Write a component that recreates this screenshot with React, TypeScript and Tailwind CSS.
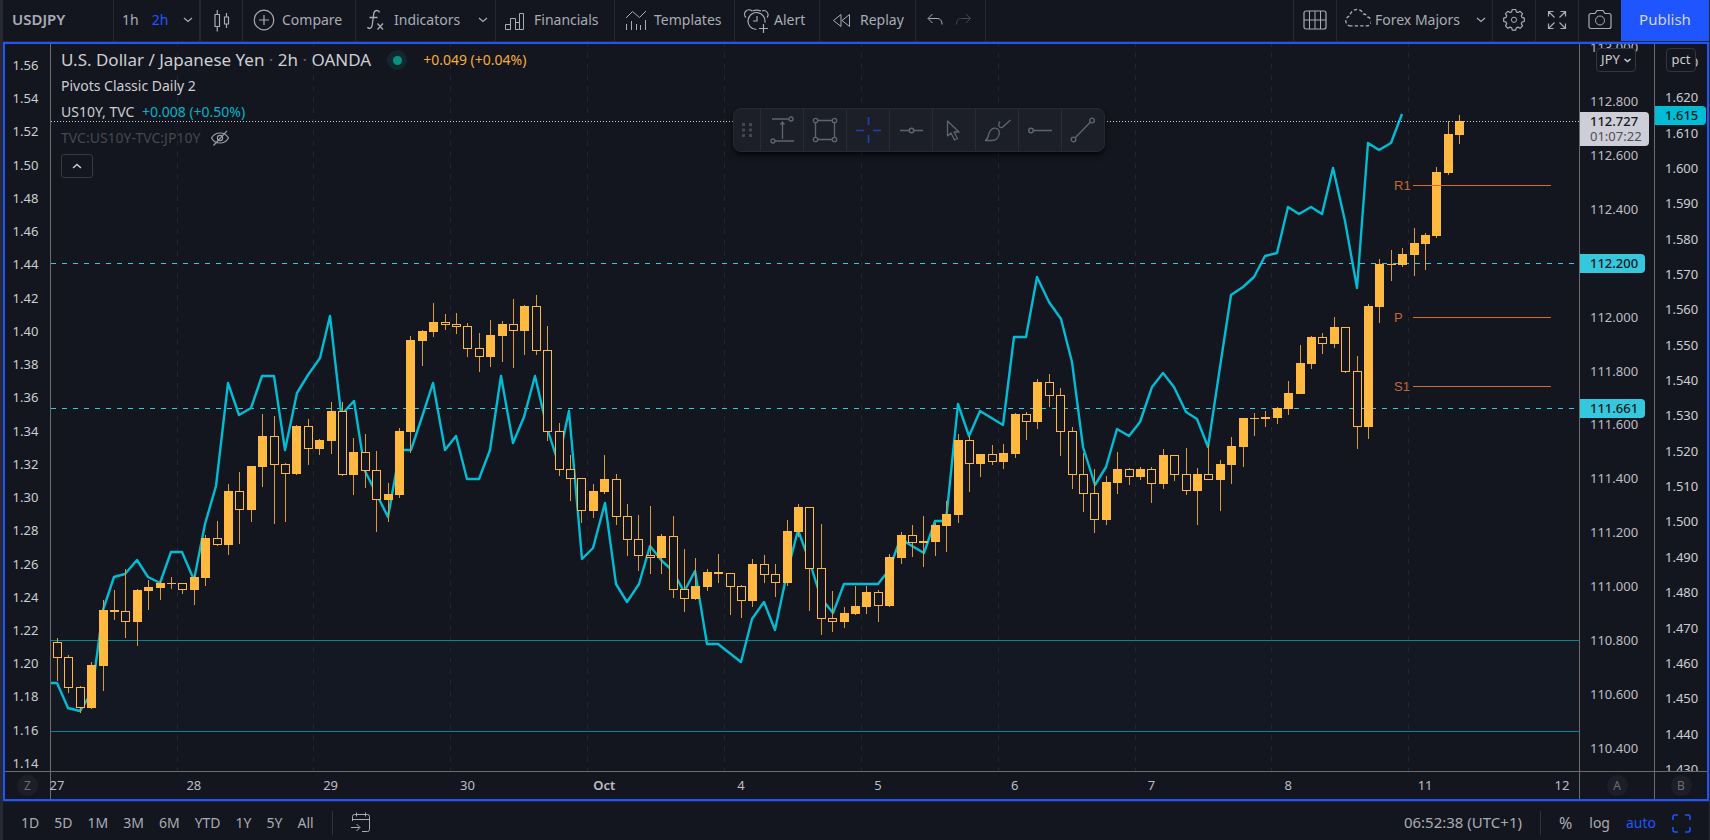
import type { ReactNode } from "react";

type Candle = [high: number, top: number, bottom: number, low: number, up: 0 | 1];

const candles: Candle[] = [
  [638, 642, 658, 681, 0], [655, 657, 688, 693, 0], [686, 687, 708, 713, 0], [662, 665, 708, 709, 1],
  [600, 610, 666, 691, 1], [590, 610, 612, 620, 1], [569, 611, 622, 638, 0], [589, 590, 622, 646, 1],
  [580, 587, 591, 610, 1], [581, 583, 588, 600, 1], [577, 583, 584, 589, 1], [583, 583, 590, 594, 0],
  [575, 577, 590, 605, 1], [535, 538, 578, 586, 1], [521, 538, 545, 546, 0], [484, 491, 545, 555, 1],
  [472, 491, 510, 544, 0], [466, 466, 510, 522, 1], [414, 436, 467, 487, 1], [416, 436, 465, 524, 0],
  [463, 464, 474, 522, 0], [425, 426, 474, 475, 1], [419, 426, 449, 465, 0], [439, 440, 449, 455, 1],
  [402, 411, 441, 454, 1], [402, 411, 475, 476, 0], [438, 452, 475, 495, 1], [434, 452, 471, 488, 0],
  [451, 470, 500, 532, 0], [483, 494, 500, 522, 1], [428, 431, 495, 498, 1], [336, 340, 432, 453, 1],
  [330, 331, 341, 366, 1], [303, 322, 332, 337, 1], [314, 322, 325, 330, 0], [313, 324, 327, 334, 0],
  [323, 326, 349, 357, 0], [333, 348, 357, 372, 0], [320, 335, 357, 367, 1], [321, 324, 336, 362, 1],
  [299, 324, 331, 368, 0], [305, 306, 331, 355, 1], [295, 306, 351, 355, 0], [326, 350, 432, 441, 0],
  [423, 431, 470, 476, 0], [455, 469, 479, 501, 0], [478, 478, 511, 523, 0], [484, 491, 511, 518, 1],
  [455, 479, 492, 494, 1], [474, 479, 517, 525, 0], [504, 516, 540, 556, 0], [515, 539, 556, 571, 0],
  [506, 555, 558, 574, 0], [534, 536, 558, 574, 1], [516, 536, 590, 598, 0], [549, 589, 599, 612, 0],
  [558, 586, 599, 600, 1], [569, 572, 587, 591, 1], [554, 572, 574, 583, 1], [573, 573, 587, 615, 0],
  [585, 586, 601, 618, 0], [559, 564, 601, 607, 1], [555, 564, 575, 583, 0], [564, 574, 583, 597, 0],
  [520, 531, 583, 586, 1], [504, 507, 532, 537, 1], [507, 507, 569, 611, 0], [524, 568, 619, 635, 0],
  [591, 618, 622, 632, 0], [607, 613, 622, 628, 1], [586, 606, 614, 615, 1], [586, 592, 607, 614, 1],
  [590, 592, 606, 622, 0], [554, 557, 606, 607, 1], [532, 535, 558, 564, 1], [525, 535, 543, 557, 0],
  [516, 541, 543, 567, 1], [523, 525, 542, 556, 1], [501, 514, 526, 552, 1], [434, 440, 515, 523, 1],
  [436, 440, 464, 492, 0], [454, 454, 464, 477, 1], [445, 454, 462, 465, 0], [444, 453, 462, 469, 1],
  [413, 414, 454, 458, 1], [412, 414, 422, 440, 0], [379, 382, 422, 429, 1], [374, 382, 396, 407, 0],
  [388, 395, 432, 456, 0], [427, 431, 475, 489, 0], [453, 474, 494, 512, 0], [469, 493, 520, 533, 0],
  [476, 482, 520, 525, 1], [452, 469, 483, 494, 1], [468, 469, 477, 485, 0], [467, 469, 477, 480, 1],
  [467, 469, 484, 503, 0], [449, 455, 484, 489, 1], [455, 455, 475, 481, 0], [448, 474, 491, 495, 0],
  [468, 474, 491, 525, 1], [444, 474, 480, 480, 0], [460, 464, 480, 511, 1], [437, 446, 465, 484, 1],
  [418, 418, 447, 467, 1], [413, 418, 419, 436, 1], [411, 417, 419, 427, 1], [407, 408, 418, 424, 1],
  [381, 393, 409, 415, 1], [345, 363, 394, 394, 1], [336, 337, 364, 369, 1], [333, 337, 344, 354, 0],
  [317, 327, 344, 348, 1], [327, 327, 372, 373, 0], [356, 371, 427, 449, 0], [304, 306, 427, 439, 1],
  [259, 264, 307, 323, 1], [250, 264, 265, 281, 1], [248, 254, 265, 267, 1], [228, 243, 255, 276, 1],
  [233, 235, 244, 270, 1], [167, 172, 236, 238, 1], [121, 134, 173, 175, 1], [115, 121, 135, 144, 1],
];

const yieldLine =
  "51,683 57,683 68,708 80,711 92,692 99,640 103,610 114,577 125,574 137,560 148,577 160,583 171,552 182,552 194,580 205,524 216,486 228,383 239,415 251,408 262,376 274,376 285,450 297,393 308,375 320,358 330,316 341,413 343,413 354,401 365,471 377,495 388,517 400,450 411,450 422,417 433,383 445,450 456,436 467,479 479,479 490,450 501,376 513,443 524,417 535,376 547,428 558,462 569,411 582,559 593,548 605,503 616,584 627,602 639,584 650,546 662,561 673,571 684,592 695,571 707,644 718,644 741,662 752,619 764,602 775,630 787,573 798,530 809,560 821,598 833,613 844,584 878,584 889,570 901,537 907,543 924,553 935,521 946,521 958,404 969,436 980,411 1003,425 1014,337 1026,337 1037,277 1049,302 1061,319 1072,362 1083,447 1095,485 1106,467 1117,429 1129,436 1140,422 1152,387 1163,373 1174,387 1186,412 1197,419 1208,447 1220,367 1231,295 1243,287 1254,277 1265,256 1277,253 1288,207 1299,214 1311,207 1322,214 1333,168 1345,221 1357,288 1368,143 1379,150 1391,143 1402,114";

const dayLines = [177, 313, 450, 587, 724, 861, 998, 1135, 1271, 1408];

const leftScale = Array.from({ length: 22 }, (_, i) => (1.56 - i * 0.02).toFixed(2));
const priceScale = Array.from({ length: 14 }, (_, i) => (113 - i * 0.2).toFixed(3));
const pctScale = Array.from({ length: 21 }, (_, i) => (1.63 - i * 0.01).toFixed(3));
const timeScale = ["27", "28", "29", "30", "Oct", "4", "5", "6", "7", "8", "11", "12"];
const ranges = ["1D", "5D", "1M", "3M", "6M", "YTD", "1Y", "5Y", "All"];

const pivots = [
  { name: "R1", y: 185 },
  { name: "P", y: 317 },
  { name: "S1", y: 386 },
];

function Icon({ children, className = "size-7" }: { children: ReactNode; className?: string }) {
  return (
    <svg viewBox="0 0 28 28" className={`shrink-0 ${className}`} fill="none" stroke="currentColor" aria-hidden="true">
      {children}
    </svg>
  );
}

function Chevron() {
  return (
    <svg viewBox="0 0 10 6" className="h-[6px] w-[10px] shrink-0" fill="none" stroke="currentColor" strokeWidth="1.2" aria-hidden="true">
      <path d="M1 1l4 3.5L9 1" />
    </svg>
  );
}

function ToolButton({ className, label, children }: { className: string; label?: string; children: ReactNode }) {
  return (
    <button type="button" aria-label={label} className={`flex h-full shrink-0 items-center border-[#262932] pb-[2px] ${className}`}>
      {children}
    </button>
  );
}

function Toolbar() {
  return (
    <header className="flex h-[42px] shrink-0 items-center border-b border-[#262932] bg-[#13161e] text-sm text-[#a9acb5]">
      <ToolButton className="w-[111px] border-r pl-[9px] text-[15px] font-semibold">USDJPY</ToolButton>
      <div className="flex h-full w-[87px] shrink-0 items-center border-r-2 border-[#262932] pr-[6px] pb-[2px] pl-2">
        <button type="button">1h</button>
        <button type="button" className="ml-[13px] text-[#1f55ff]">2h</button>
        <button type="button" aria-label="Time intervals" className="ml-auto"><Chevron /></button>
      </div>
      <ToolButton className="w-[42px] justify-center border-r" label="Chart type">
        <Icon>
          <path d="M7 8.500h4.500v12H7zM9.250 4v4.500M9.250 20.500v5M16.500 11h4v7h-4zM18.500 7v4M18.500 18v4" strokeWidth="1.200" />
        </Icon>
      </ToolButton>
      <ToolButton className="w-[113px] gap-1 border-r pl-[7px]">
        <Icon>
          <circle cx="14" cy="14" r="9.800" strokeWidth="1.200" />
          <path d="M14 9v10M9 14h10" strokeWidth="1.200" />
        </Icon>
        <span>Compare</span>
      </ToolButton>
      <ToolButton className="w-[140px] border-r pr-[7px] pl-[6px]">
        <Icon>
          <path d="M17.500 6.500c-.3-1.400-1.300-2-2.500-2-1.900 0-3 1.300-3.300 3.500l-1.500 11c-.3 2.300-1.200 3.500-2.700 3.500-1.100 0-1.700-.6-1.900-1.500M7.500 11.500h8M15.500 17.500l5.500 6M21 17.500l-5.500 6" strokeWidth="1.300" />
        </Icon>
        <span className="ml-1">Indicators</span>
        <span className="ml-auto"><Chevron /></span>
      </ToolButton>
      <ToolButton className="w-[119px] gap-[5px] border-r pl-[5px]">
        <Icon>
          <path d="M4.500 23.500v-5h5v5zM9.500 23.500v-11h5v11M14.500 23.500v-7h4M18.500 23.500v-16h4v16zM14.500 23.500h4" />
        </Icon>
        <span>Financials</span>
      </ToolButton>
      <ToolButton className="w-[120px] gap-1 border-r pl-[7px]">
        <Icon>
          <path d="M4 12l6.500-6.500 7 6L24 5M4.500 18v6M9.500 15v9M14.500 18v6M18.500 19v5M23.500 14v10" />
        </Icon>
        <span>Templates</span>
      </ToolButton>
      <ToolButton className="w-[85px] gap-1 border-r pl-[7px]">
        <Icon>
          <path d="M14.500 23.500a8.500 8.500 0 1 1 8.300-6.800M15 10v5h-4M4 11.500A4.200 4.200 0 0 1 10 5M20 5a4.200 4.200 0 0 1 5 6.500M10.500 5q4-1.800 8.500 0M21.500 18v9M17 22.500h9" strokeWidth="1.200" />
        </Icon>
        <span>Alert</span>
      </ToolButton>
      <ToolButton className="w-[96px] gap-1 border-r pl-2">
        <Icon>
          <path d="M13 8.500v12l-7.500-6zM21.500 8.500v12l-7.500-6z" strokeLinejoin="round" />
        </Icon>
        <span>Replay</span>
      </ToolButton>
      <div className="flex h-full w-[70px] shrink-0 items-center border-r border-[#262932] pb-[2px] pl-[5px]">
        <button type="button" aria-label="Undo">
          <Icon><path d="M11.500 8L7 12.500l4.500 4.500M7.500 12.500H16c3.200 0 5 2 5 6" /></Icon>
        </button>
        <button type="button" aria-label="Redo" className="text-[#43464f]">
          <Icon><path d="M17 8l4.500 4.500L17 17M21 12.500h-8.500c-3.200 0-5 2-5 6" /></Icon>
        </button>
      </div>
      <div className="h-full flex-1" />
      <ToolButton className="w-[44px] justify-center border-x" label="Layout">
        <Icon>
          <rect x="3" y="5" width="22" height="18" rx="2" strokeWidth="1.200" />
          <path d="M8.500 5v18M14 5v18M19.500 5v18M3 14h22" />
        </Icon>
      </ToolButton>
      <ToolButton className="w-[156px] border-r pr-[6px] pl-[6px]">
        <Icon>
          <path d="M7 23h15.500a4 4 0 0 0 1.200-8c-.8-1.700-2-2.600-3.700-2.700A6.500 6.500 0 0 0 7.500 14 4.700 4.700 0 0 0 7 23z" strokeDasharray="3 2" strokeWidth="1.200" transform="translate(-1.500 -5.500) scale(1.100)" />
        </Icon>
        <span className="ml-1">Forex Majors</span>
        <span className="ml-auto"><Chevron /></span>
      </ToolButton>
      <ToolButton className="w-[43px] justify-center border-r" label="Settings">
        <Icon>
          <path d="M11.600 5.900l.7-2.400h3.400l.7 2.400 1.500.6 2.200-1.200 2.400 2.400-1.200 2.200.6 1.500 2.400.7v3.400l-2.400.7-.6 1.500 1.200 2.200-2.400 2.400-2.200-1.200-1.500.6-.7 2.400h-3.400l-.7-2.400-1.500-.6-2.200 1.200-2.400-2.400 1.200-2.200-.6-1.500-2.400-.7v-3.400l2.400-.7.6-1.500-1.200-2.200 2.400-2.400 2.200 1.200z" strokeLinejoin="round" strokeWidth="1.200" />
          <circle cx="14" cy="13.800" r="2.600" />
        </Icon>
      </ToolButton>
      <ToolButton className="w-[43px] justify-center border-r" label="Fullscreen">
        <Icon>
          <path d="M5.500 10.500v-5h5M5.500 5.500l6 6M17.500 5.500h5v5M22.500 5.500l-6 6M5.500 17.500v5h5M5.500 22.500l6-6M17.500 22.500h5v-5M22.500 22.500l-6-6" strokeWidth="1.200" />
        </Icon>
      </ToolButton>
      <ToolButton className="w-[42px] justify-center" label="Snapshot">
        <Icon>
          <path d="M5 7.500h4l2-3h6l2 3h4a2 2 0 0 1 2 2v11a2 2 0 0 1-2 2H5a2 2 0 0 1-2-2v-11a2 2 0 0 1 2-2z" strokeWidth="1.200" />
          <circle cx="14" cy="14.500" r="4.500" />
        </Icon>
      </ToolButton>
      <button type="button" className="h-full w-[88px] shrink-0 bg-[#1f55ff] pb-[2px] text-[15px] text-[#d1d4dc]">Publish</button>
    </header>
  );
}

function PriceChart() {
  return (
    <svg viewBox="51 44 1528 727" preserveAspectRatio="none" className="block h-full w-full" role="img" aria-label="USDJPY price chart">
      <g shapeRendering="crispEdges" fill="none">
        <rect x="51" y="641" width="1528" height="90" fill="#141822" />
        {dayLines.map((x) => (
          <path key={x} d={`M${x + 0.5} 42V771`} stroke="#232630" strokeDasharray="5 6" />
        ))}
        <path d="M51 640.500H1579M51 731.500H1579" stroke="#04858f" />
        <path d="M51 263.500H1579M51 408.500H1579" stroke="#35c8dc" strokeDasharray="5 6" />
      </g>
      <polyline points={yieldLine} fill="none" stroke="#00bcd4" strokeWidth="2.400" strokeLinejoin="round" />
      <g shapeRendering="crispEdges">
        {candles.map(([high, top, bottom, low, up], i) => {
          const x = Math.floor(57.5 + 11.4 * i);
          return (
            <g key={i}>
              <rect x={x} y={high} width="1" height={low - high} fill="#d99a38" />
              {up ? (
                <rect x={x - 4} y={top} width="9" height={bottom - top} fill="#ffb941" />
              ) : (
                <rect x={x - 3.5} y={top + 0.5} width="8" height={bottom - top - 1} fill="#13161e" stroke="#ffb941" />
              )}
            </g>
          );
        })}
        {pivots.map((p) => (
          <path key={p.name} d={`M1413 ${p.y + 0.5}H1551`} stroke="#d06f31" />
        ))}
        <path d="M51 121.500H1579" stroke="#cdced6" strokeDasharray="1 2" />
      </g>
      <g fill="#c4682f" fontSize="13" fontFamily="Liberation Sans, sans-serif">
        {pivots.map((p) => (
          <text key={p.name} x="1394" y={p.y + 5}>{p.name}</text>
        ))}
      </g>
    </svg>
  );
}

function Legend() {
  return (
    <div className="absolute top-[3px] left-[10px] flex flex-col items-start text-sm leading-[26px] text-[#cdced3]">
      <div className="flex h-[26px] items-center">
        <h1 className="text-[17px] whitespace-pre">U.S. Dollar / Japanese Yen <span className="text-[#5b5e67]">·</span> 2h <span className="text-[#5b5e67]">·</span> OANDA</h1>
        <span className="ml-4 flex size-5 items-center justify-center rounded-full bg-[#11292e]">
          <span className="size-[9px] rounded-full bg-[#04937f]" />
        </span>
        <span className="ml-4 text-[#f5ae3c]">+0.049 (+0.04%)</span>
      </div>
      <div>Pivots Classic Daily 2</div>
      <div>US10Y, TVC <span className="ml-1 text-[#00b4ca]">+0.008 (+0.50%)</span></div>
      <div className="flex items-center text-[#454851]">
        TVC:US10Y-TVC:JP10Y
        <button type="button" aria-label="Show study" className="ml-[10px] text-[#9c9fa8]">
          <svg viewBox="0 0 20 16" className="h-4 w-5" fill="none" stroke="currentColor" strokeWidth="1.200" aria-hidden="true">
            <path d="M1.500 8C3.500 4.500 6.500 3 10 3s6.500 1.500 8.500 5c-2 3.500-5 5-8.500 5S3.500 11.500 1.500 8zM17 .8L3.500 15.500" />
            <circle cx="10" cy="8" r="2.600" />
          </svg>
        </button>
      </div>
      <button type="button" aria-label="Collapse legend" className="mt-[3px] flex h-6 w-8 items-center justify-center rounded-[3px] border border-[#363942]">
        <svg viewBox="0 0 10 6" className="h-[6px] w-[10px]" fill="none" stroke="currentColor" strokeWidth="1.500" aria-hidden="true">
          <path d="M1 5l4-3.500L9 5" />
        </svg>
      </button>
    </div>
  );
}

const drawingTools: { name: string; icon: ReactNode }[] = [
  { name: "Price range", icon: <path d="M4 3h17M7 25h19M14.500 23V6M12.500 8.500l2-2.500 2 2.500M23 1a2 2 0 1 1 0 4 2 2 0 0 1 0-4M5 23a2 2 0 1 1 0 4 2 2 0 0 1 0-4" strokeWidth="1.300" /> },
  { name: "Rectangle", icon: <g strokeWidth="1.300"><path d="M6.500 4.500h15M6.500 23.500h15M4.500 6.500v15M23.500 6.500v15" /><circle cx="4.500" cy="4.500" r="2.200" /><circle cx="23.500" cy="4.500" r="2.200" /><circle cx="4.500" cy="23.500" r="2.200" /><circle cx="23.500" cy="23.500" r="2.200" /></g> },
  { name: "Cross", icon: <path d="M14.500 1v8M14.500 19v8M2 14.500h8M19 14.500h8" stroke="#1f3fb0" strokeWidth="1.700" /> },
  { name: "Horizontal line", icon: <g strokeWidth="1.500"><path d="M3 14.500h9M17 14.500h9" /><circle cx="14.500" cy="14.500" r="2.300" /></g> },
  { name: "Arrow", icon: <path d="M7.500 5v15l3.500-3 3.500 7 3-1.500-3.500-6.500h5z" strokeLinejoin="round" strokeWidth="1.300" /> },
  { name: "Brush", icon: <path d="M2 24.500c3-1 3-4 4-7 1.200-3.300 3.500-5.300 6-5.300 2.800 0 4.500 2 4.300 5-.3 4.300-3.300 7.300-7.800 7.300zM17 5.500c-1.500 2-1.500 4-.500 5.300s2.500 1 3.800-.300L27.500 4" strokeWidth="1.300" /> },
  { name: "Horizontal ray", icon: <g strokeWidth="1.500"><circle cx="5" cy="14.500" r="2.300" /><path d="M7.500 14.500H26" /></g> },
  { name: "Trend line", icon: <g strokeWidth="1.300"><path d="M6 22L21.500 6" /><circle cx="4.500" cy="23.500" r="2.300" /><circle cx="23" cy="4.500" r="2.300" /></g> },
];

function DrawingBar() {
  return (
    <div className="absolute top-16 left-[682px] flex h-11 items-stretch overflow-hidden rounded-lg border border-[#262932] bg-[#1c1f28] text-[#5c6672] shadow-md shadow-black/60">
      <div className="flex w-[26px] items-center justify-center">
        <svg viewBox="0 0 10 14" className="h-[14px] w-[10px]" fill="#43464f" aria-hidden="true">
          <path d="M0 0h3v3H0zM7 0h3v3H7zM0 5.500h3v3H0zM7 5.500h3v3H7zM0 11h3v3H0zM7 11h3v3H7z" />
        </svg>
      </div>
      {drawingTools.map((tool) => (
        <button key={tool.name} type="button" aria-label={tool.name} className="flex w-[43px] items-center justify-center border-l border-[#292c35]">
          <Icon>{tool.icon}</Icon>
        </button>
      ))}
    </div>
  );
}

function AxisCorner({ letter, className }: { letter: string; className: string }) {
  return (
    <div className={`flex items-center justify-center ${className}`}>
      <span className="flex size-[21px] items-center justify-center rounded-full bg-[#1c1f28] text-xs text-[#6a6d76]">{letter}</span>
    </div>
  );
}

function ChartPanel() {
  return (
    <main className="flex min-h-0 flex-1 flex-col border-2 border-[#1f55ff] text-[13px] text-[#bdbec3]">
      <div className="flex min-h-0 flex-1">
        <div className="flex w-[46px] shrink-0 flex-col items-center justify-between border-r border-[#6c6c6c] pt-[13px] pr-1 leading-4 text-[#cdced3]">
          {leftScale.map((v) => <span key={v}>{v}</span>)}
        </div>
        <div className="relative min-w-0 flex-1">
          <div className="absolute inset-0"><PriceChart /></div>
          <Legend />
          <DrawingBar />
        </div>
        <div className="relative w-[75px] shrink-0 overflow-hidden border-l border-[#6c6c6c]">
          <div className="absolute inset-x-0 -top-[5px] bottom-[15px] flex flex-col items-start justify-between pl-[10px] leading-4">
            {priceScale.map((v) => <span key={v}>{v}</span>)}
          </div>
          <button type="button" className="absolute top-1 left-4 flex h-6 w-10 items-center justify-center gap-1 rounded border border-[#33363f] bg-[#13161e] text-[#cdced3]">
            JPY
            <svg viewBox="0 0 7 5" className="h-[5px] w-[7px]" fill="none" stroke="currentColor" strokeWidth="1.500" aria-hidden="true"><path d="M.5 1l3 2.500 3-2.500" /></svg>
          </button>
          <div className="absolute top-[68px] left-0 w-[69px] rounded-r-sm bg-[#cdced8] py-[2px] pl-[10px] leading-[15px] text-[#13161e]">
            <div className="font-medium">112.727</div>
            <div className="text-[#4d4f57]">01:07:22</div>
          </div>
          <div className="absolute top-[210px] left-0 w-[65px] rounded-r-sm bg-[#35c8dc] pl-[10px] leading-[19px] font-medium text-[#13161e]">112.200</div>
          <div className="absolute top-[355px] left-0 w-[65px] rounded-r-sm bg-[#35c8dc] pl-[10px] leading-[19px] font-medium text-[#13161e]">111.661</div>
        </div>
        <div className="relative w-[53px] shrink-0 overflow-hidden border-l border-[#6c6c6c] text-[#cdced3]">
          <div className="absolute inset-x-0 top-[10px] -bottom-[6px] flex flex-col items-start justify-between pl-[10px] leading-4">
            {pctScale.map((v) => <span key={v}>{v}</span>)}
          </div>
          <button type="button" className="absolute top-1 left-[11px] h-6 w-[30px] rounded border border-[#33363f] bg-[#13161e]">pct</button>
          <div className="absolute top-[62px] left-0 w-[51px] rounded-r-sm bg-[#00bcd4] pl-[10px] leading-[19px] font-medium text-[#13161e]">1.615</div>
        </div>
      </div>
      <div className="flex h-7 shrink-0 border-t border-[#6c6c6c]">
        <AxisCorner letter="Z" className="w-[46px] border-r border-[#6c6c6c]" />
        <div className="flex min-w-0 flex-1 items-center justify-between pt-px pr-[17px] pl-[6px]">
          {timeScale.map((t) => (
            <span key={t} className={t === "Oct" ? "flex w-0 justify-center font-semibold" : "flex w-0 justify-center"}>{t}</span>
          ))}
        </div>
        <AxisCorner letter="A" className="w-[75px] border-l border-[#6c6c6c]" />
        <AxisCorner letter="B" className="w-[53px] border-l border-[#6c6c6c]" />
      </div>
    </main>
  );
}

function BottomBar() {
  return (
    <footer className="flex h-[39px] shrink-0 items-center border-t border-[#262932] px-[18px] pt-1 text-sm text-[#a9acb5]">
      <div className="flex gap-[15px]">
        {ranges.map((r) => <button key={r} type="button">{r}</button>)}
      </div>
      <div className="ml-[18px] h-6 w-px bg-[#30333c]" />
      <button type="button" aria-label="Go to date" className="ml-[14px]">
        <Icon>
          <path d="M5.500 12V7.500a2 2 0 0 1 2-2h13a2 2 0 0 1 2 2v13a2 2 0 0 1-2 2H15M5.500 10.500h17M9.500 3.500v4M18.500 3.500v4M4 18.500h8.500M9.500 15l3.500 3.500L9.500 22" />
        </Icon>
      </button>
      <div className="flex-1" />
      <button type="button" className="text-[15px]">06:52:38 (UTC+1)</button>
      <div className="ml-[18px] h-6 w-px bg-[#30333c]" />
      <button type="button" className="ml-[18px] text-base">%</button>
      <button type="button" className="ml-[17px]">log</button>
      <button type="button" className="ml-4 text-[#1f55ff]">auto</button>
      <button type="button" aria-label="Maximize chart" className="ml-4 text-[#1f55ff]">
        <svg viewBox="0 0 19 19" className="size-[19px]" fill="none" stroke="currentColor" strokeWidth="1.500" aria-hidden="true">
          <path d="M1 6V3a2 2 0 0 1 2-2h3M13 1h3a2 2 0 0 1 2 2v3M18 13v3a2 2 0 0 1-2 2h-3M6 18H3a2 2 0 0 1-2-2v-3" />
        </svg>
      </button>
    </footer>
  );
}

export default function App() {
  return (
    <div className="flex h-screen flex-col overflow-hidden border-r border-l-3 border-[#262932] bg-[#13161e] font-['Noto_Sans',sans-serif]">
      <Toolbar />
      <ChartPanel />
      <BottomBar />
    </div>
  );
}
